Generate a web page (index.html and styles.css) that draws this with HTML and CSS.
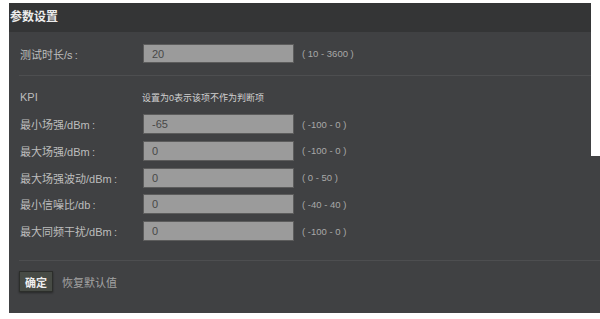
FILE: index.html
```html
<!DOCTYPE html>
<html lang="zh-CN">
<head>
    <meta charset="UTF-8">
    <meta name="viewport" content="width=device-width, initial-scale=1.0">
    <title>参数设置</title>
    <link rel="stylesheet" href="styles.css">
</head>
<body>
    <div class="panel">
        <div class="panel-title">参数设置</div>
        <div class="panel-body">
            <div class="form-row first">
                <label>测试时长/s&thinsp;:</label>
                <input type="text" value="20">
                <span class="range">( 10 - 3600 )</span>
            </div>

            <div class="divider"></div>

            <div class="kpi-head">
                <span class="kpi-label">KPI</span>
                <span class="kpi-note">设置为0表示该项不作为判断项</span>
            </div>

            <div class="kpi-rows">
                <div class="form-row">
                    <label>最小场强/dBm&thinsp;:</label>
                    <input type="text" value="-65">
                    <span class="range">( -100 - 0 )</span>
                </div>
                <div class="form-row">
                    <label>最大场强/dBm&thinsp;:</label>
                    <input type="text" value="0">
                    <span class="range">( -100 - 0 )</span>
                </div>
                <div class="form-row">
                    <label>最大场强波动/dBm&thinsp;:</label>
                    <input type="text" value="0">
                    <span class="range">( 0 - 50 )</span>
                </div>
                <div class="form-row">
                    <label>最小信噪比/db&thinsp;:</label>
                    <input type="text" value="0">
                    <span class="range">( -40 - 40 )</span>
                </div>
                <div class="form-row">
                    <label>最大同频干扰/dBm&thinsp;:</label>
                    <input type="text" value="0">
                    <span class="range">( -100 - 0 )</span>
                </div>
            </div>

            <div class="divider bottom"></div>

            <div class="actions">
                <button type="button">确定</button>
                <a class="reset">恢复默认值</a>
            </div>
        </div>
    </div>
</body>
</html>
```

FILE: styles.css
```css
body {
    margin: 0;
    background: #fff;
    font-family: "Liberation Sans", "Noto Sans CJK SC", sans-serif;
}
.panel {
    position: relative;
    margin: 3px 0 0 9px;
    background: #404143;
    height: 310px;
}
/* white notch at the top right of the screenshot */
.panel::after {
    content: "";
    position: absolute;
    top: -3px;
    right: 0;
    width: 9px;
    height: 156px;
    background: #fff;
}
.panel-title {
    height: 29px;
    line-height: 29px;
    padding-left: 1px;
    background: #343536;
    color: #ececec;
    font-size: 12px;
    font-weight: bold;
}
.panel-body {
    padding: 12px 0 0 10px;
}
.form-row {
    display: flex;
    align-items: center;
    height: 20px;
}
.form-row.first {
    height: 19px;
}
.form-row label {
    width: 123px;
    padding-left: 1px;
    color: #bdbdbd;
    font-size: 11px;
}
.form-row input {
    width: 151px;
    height: 100%;
    box-sizing: border-box;
    padding: 0 8px;
    border: 1px solid #5c5c5c;
    background: #9b9b9b;
    color: #484848;
    font-family: "Liberation Sans", sans-serif;
    font-size: 11px;
}
.range {
    margin-left: 8px;
    color: #a8a8a8;
    font-size: 9.5px;
}
.divider {
    height: 1px;
    margin-top: 12px;
    background: #4d4e50;
}
.divider.bottom {
    margin-top: 19px;
}
.kpi-head {
    display: flex;
    align-items: center;
    height: 14px;
    margin: 14px 0 10px;
}
.kpi-label {
    width: 122px;
    padding-left: 1px;
    color: #bdbdbd;
    font-size: 11px;
}
.kpi-note {
    color: #d0d0d0;
    font-size: 9px;
}
.kpi-rows {
    display: flex;
    flex-direction: column;
    gap: 6.75px;
}
.actions {
    display: flex;
    align-items: center;
    gap: 9px;
    margin-top: 10px;
}
button {
    width: 34px;
    height: 21px;
    padding: 0;
    border: 1px solid #2c2e2b;
    background: #474b45;
    box-shadow: 0 1px 2px rgba(0,0,0,0.4);
    color: #eee;
    font-family: "Noto Sans CJK SC", sans-serif;
    font-size: 11px;
    font-weight: bold;
}
.reset {
    color: #a4a4a4;
    font-size: 11px;
}
```
